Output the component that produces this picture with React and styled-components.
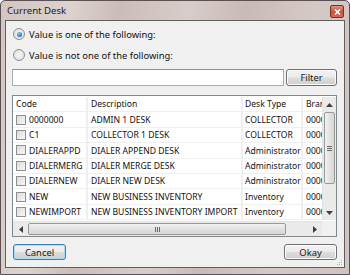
import React from "react";
import styled, { createGlobalStyle } from "styled-components";

const Global = createGlobalStyle`
  html, body { margin: 0; padding: 0; background: #fff; }
  body { font-family: "Noto Sans", "Liberation Sans", sans-serif; }
`;

const Window = styled.div`
  width: 350px;
  height: 275px;
  box-sizing: border-box;
  border: 1px solid #5a5252;
  border-radius: 5px 5px 0 0;
  background: linear-gradient(100deg, #d2c5c2 0%, #ddd2cf 18%, #cbbcb9 30%, #d8cdca 48%, #c9bab7 62%, #d5c9c6 80%, #cfc2bf 100%);
  padding: 0 4px 6px 4px;
  display: flex;
  flex-direction: column;
  font-size: 9.4px;
  color: #111;
`;

const TitleBar = styled.div`
  height: 20px;
  display: flex;
  align-items: center;
  justify-content: space-between;
  padding: 0 1px 0 2px;
`;

const Title = styled.span`
  font-size: 9.6px;
  color: #1c1c1c;
`;

const Close = styled.div`
  width: 14px;
  height: 13px;
  margin-top: 2px;
  box-sizing: border-box;
  border: 1px solid #7a2f26;
  border-radius: 2px;
  background: linear-gradient(#e3907e, #c9523f 55%, #d56a52);
  display: flex;
  align-items: center;
  justify-content: center;
`;

const Client = styled.div`
  flex: 1;
  box-sizing: border-box;
  border: 1px solid #5e5e5e;
  background: #f0f0f0;
  padding: 6px 7px 7px 6px;
  display: flex;
  flex-direction: column;
  position: relative;
`;

const RadioRow = styled.label`
  height: 14px;
  display: flex;
  align-items: center;
  gap: 4px;
  padding-left: 1px;
  margin-bottom: ${(p) => p.$mb || 0}px;
`;

const RadioCircle = styled.span`
  width: 12px;
  height: 12px;
  box-sizing: border-box;
  border-radius: 50%;
  border: 1px solid #8e8f8f;
  background: radial-gradient(circle, #f4f4f4 0%, #dcdcdc 100%);
  display: flex;
  align-items: center;
  justify-content: center;
  &::after {
    content: "";
    width: 5px;
    height: 5px;
    border-radius: 50%;
    background: ${(p) => (p.$on ? "radial-gradient(circle at 40% 35%, #8fd3ff, #1f6fb5 70%)" : "transparent")};
  }
`;

const FilterRow = styled.div`
  display: flex;
  height: 17px;
  gap: 2px;
  margin-bottom: 9px;
`;

const TextInput = styled.div`
  flex: 1;
  box-sizing: border-box;
  border: 1px solid #abadb3;
  border-top-color: #8e8f8f;
  background: #fff;
`;

const Button = styled.div`
  width: ${(p) => p.$w}px;
  height: ${(p) => p.$h}px;
  box-sizing: border-box;
  border: 1px solid ${(p) => (p.$def ? "#3c7fb1" : "#707070")};
  border-radius: 3px;
  background: linear-gradient(#f2f2f2 0%, #ebebeb 48%, #dddddd 52%, #cfcfcf 100%);
  box-shadow: inset 0 0 0 1px ${(p) => (p.$def ? "#a6dcf5" : "#fcfcfc")};
  display: flex;
  align-items: center;
  justify-content: center;
  color: #1a1a1a;
  font-size: 9.4px;
`;

const List = styled.div`
  height: 142px;
  box-sizing: border-box;
  border: 1px solid #828790;
  background: #fff;
  display: grid;
  grid-template-columns: 1fr 14px;
  grid-template-rows: 1fr 15px;
  padding-top: 1px;
  row-gap: 1px;
`;

const TableArea = styled.div`
  overflow: hidden;
  background: #fff;
`;

const Table = styled.div`
  display: grid;
  grid-template-columns: 73px 153px 58px 60px;
  grid-auto-rows: 14.4px;
  column-gap: 2px;
  row-gap: 1px;
  background: #efefef;
  width: max-content;
  padding-bottom: 1px;
  font-size: 8.6px;
`;

const Cell = styled.div`
  background: #fff;
  padding: 1px 0 0 ${(p) => p.$pl || 3}px;
  display: flex;
  align-items: center;
  gap: 3px;
  white-space: nowrap;
  overflow: hidden;
  line-height: 1;
`;

const Check = styled.span`
  width: 10px;
  height: 10px;
  margin-top: -1px;
  box-sizing: border-box;
  border: 1px solid #8f8f8f;
  background: linear-gradient(135deg, #dcdcdc, #f6f6f6);
  flex: none;
`;

const VScroll = styled.div`
  background: #eaeaea;
  border-left: 1px solid #e2e2e2;
  display: flex;
  flex-direction: column;
  align-items: center;
`;

const HScroll = styled.div`
  background: #eaeaea;
  border-top: 1px solid #e2e2e2;
  display: flex;
  align-items: center;
`;

const Corner = styled.div`
  background: #f0f0f0;
`;

const Arrow = styled.div`
  width: ${(p) => p.$w}px;
  height: ${(p) => p.$h}px;
  display: flex;
  align-items: center;
  justify-content: center;
  flex: none;
`;

const VThumb = styled.div`
  width: 11px;
  height: 72px;
  box-sizing: border-box;
  border: 1px solid #989898;
  border-radius: 2px;
  background: linear-gradient(90deg, #f2f2f2, #e2e2e2 50%, #d6d6d6);
  display: flex;
  align-items: center;
  justify-content: center;
`;

const HThumb = styled.div`
  width: 258px;
  height: 12px;
  box-sizing: border-box;
  border: 1px solid #989898;
  border-radius: 2px;
  background: linear-gradient(#f2f2f2, #e2e2e2 50%, #d6d6d6);
  display: flex;
  align-items: center;
  justify-content: center;
`;

const Spacer = styled.div`
  flex: 1;
`;

const ButtonRow = styled.div`
  margin-top: 7px;
  display: flex;
  justify-content: space-between;
  padding-left: 1px;
`;

const Grip = styled.svg`
  position: absolute;
  right: 1px;
  bottom: 1px;
`;

const rows = [
  ["0000000", "ADMIN 1 DESK", "COLLECTOR"],
  ["C1", "COLLECTOR 1 DESK", "COLLECTOR"],
  ["DIALERAPPD", "DIALER APPEND DESK", "Administrator"],
  ["DIALERMERG", "DIALER MERGE DESK", "Administrator"],
  ["DIALERNEW", "DIALER NEW DESK", "Administrator"],
  ["NEW", "NEW BUSINESS INVENTORY", "Inventory"],
  ["NEWIMPORT", "NEW BUSINESS INVENTORY IMPORT", "Inventory"],
];

export default function App() {
  return (
    <>
      <Global />
      <Window>
        <TitleBar>
          <Title>Current Desk</Title>
          <Close>
            <svg width="7" height="6" viewBox="0 0 7 6">
              <path d="M1 0.5 L6 5.5 M6 0.5 L1 5.5" stroke="#fff" strokeWidth="1.6" />
            </svg>
          </Close>
        </TitleBar>
        <Client>
          <RadioRow $mb={7}>
            <RadioCircle $on />
            <span>Value is one of the following:</span>
          </RadioRow>
          <RadioRow $mb={7}>
            <RadioCircle />
            <span>Value is not one of the following:</span>
          </RadioRow>
          <FilterRow>
            <TextInput />
            <Button $w={51} $h={17}>Filter</Button>
          </FilterRow>
          <List>
            <TableArea>
              <Table>
                <Cell>Code</Cell>
                <Cell>Description</Cell>
                <Cell $pl={2}>Desk Type</Cell>
                <Cell>Branch</Cell>
                {rows.map((r) => (
                  <React.Fragment key={r[0]}>
                    <Cell>
                      <Check />
                      {r[0]}
                    </Cell>
                    <Cell>{r[1]}</Cell>
                    <Cell $pl={2}>{r[2]}</Cell>
                    <Cell>0000</Cell>
                  </React.Fragment>
                ))}
              </Table>
            </TableArea>
            <VScroll>
              <Arrow $w={13} $h={15}>
                <svg width="7" height="4" viewBox="0 0 7 4"><path d="M0 4 L3.5 0 L7 4 Z" fill="#404040" /></svg>
              </Arrow>
              <VThumb>
                <svg width="5" height="5" viewBox="0 0 5 5">
                  <path d="M0 0.5 H5 M0 2.5 H5 M0 4.5 H5" stroke="#6a6a6a" strokeWidth="1" />
                </svg>
              </VThumb>
              <Spacer />
              <Arrow $w={13} $h={15}>
                <svg width="7" height="4" viewBox="0 0 7 4"><path d="M0 0 L3.5 4 L7 0 Z" fill="#404040" /></svg>
              </Arrow>
            </VScroll>
            <HScroll>
              <Arrow $w={15} $h={13}>
                <svg width="4" height="7" viewBox="0 0 4 7"><path d="M4 0 L0 3.5 L4 7 Z" fill="#404040" /></svg>
              </Arrow>
              <HThumb>
                <svg width="5" height="5" viewBox="0 0 5 5">
                  <path d="M0.5 0 V5 M2.5 0 V5 M4.5 0 V5" stroke="#6a6a6a" strokeWidth="1" />
                </svg>
              </HThumb>
              <Spacer />
              <Arrow $w={15} $h={13}>
                <svg width="4" height="7" viewBox="0 0 4 7"><path d="M0 0 L4 3.5 L0 7 Z" fill="#404040" /></svg>
              </Arrow>
            </HScroll>
            <Corner />
          </List>
          <ButtonRow>
            <Button $w={53} $h={16} $def>Cancel</Button>
            <Button $w={53} $h={16}>Okay</Button>
          </ButtonRow>
          <Grip width="6" height="6" viewBox="0 0 6 6">
            <rect x="4" y="0" width="1" height="1" fill="#b0b0b0" />
            <rect x="2" y="2" width="1" height="1" fill="#b0b0b0" />
            <rect x="4" y="2" width="1" height="1" fill="#b0b0b0" />
            <rect x="0" y="4" width="1" height="1" fill="#b0b0b0" />
            <rect x="2" y="4" width="1" height="1" fill="#b0b0b0" />
            <rect x="4" y="4" width="1" height="1" fill="#b0b0b0" />
          </Grip>
        </Client>
      </Window>
    </>
  );
}
